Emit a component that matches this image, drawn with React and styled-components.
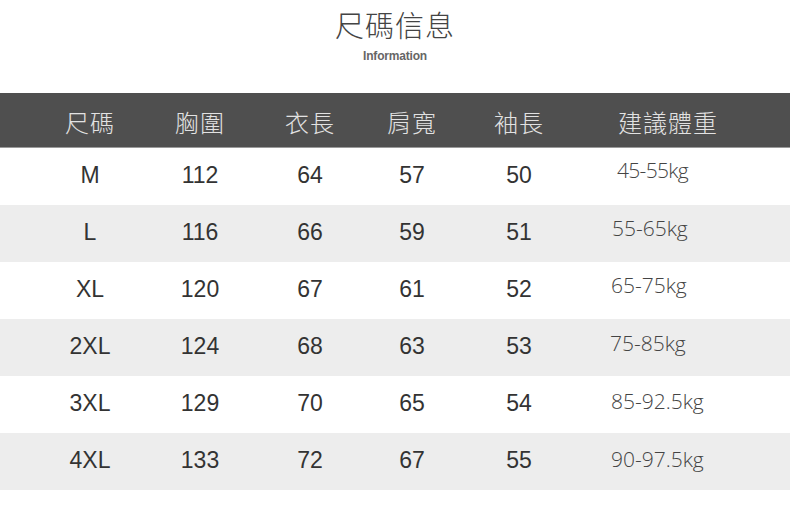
import styled, { createGlobalStyle } from 'styled-components'

const GlobalStyle = createGlobalStyle`
  html, body {
    margin:0;
    padding:0;
    background:#fff;
  }
`

const Page = styled.div`
  width:790px;
  height:515px;
  overflow:hidden;
  background:#fff;
  font-family:"Liberation Sans", Arial, sans-serif;
`

const TitleBlock = styled.div`
  height:93px;
  display:flex;
  flex-direction:column;
  align-items:center;
  padding-top:6px;
  box-sizing:border-box;
`

const Title = styled.h1`
  margin:0;
  font-family:"Noto Sans CJK TC", "Noto Sans CJK SC", sans-serif;
  font-weight:300;
  font-size:29px;
  line-height:36px;
  letter-spacing:1px;
  color:#444;
`

const SubTitle = styled.div`
  margin-top:7px;
  font-family:"Liberation Sans", Arial, sans-serif;
  font-weight:bold;
  font-size:12px;
  letter-spacing:-0.2px;
  color:#666;
`

const Row = styled.div`
  display:grid;
  grid-template-columns:35px 110px 110px 110px 94px 120px 178px;
  align-items:center;
  height:${({ $head }) => ($head ? '55px' : '57px')};
  background:${({ $head, $alt }) => ($head ? '#4f4f4f' : $alt ? '#ededed' : '#fff')};
  border-bottom:${({ $head }) => ($head ? '1px solid #9a9a9a' : 'none')};
  box-sizing:border-box;
`

const HeadCell = styled.div`
  text-align:center;
  font-family:"Noto Sans CJK TC", "Noto Sans CJK SC", sans-serif;
  font-weight:300;
  font-size:24px;
  color:#e2e2e2;
  letter-spacing:1px;
  padding-top:2px;
`

const Cell = styled.div`
  text-align:center;
  font-size:23px;
  color:#333;
  padding-bottom:2px;
`

const WeightCell = styled.div`
  font-family:"Open Sans", "Noto Sans", sans-serif;
  font-weight:300;
  font-size:21px;
  color:#444;
  letter-spacing:${({ $tight }) => ($tight ? '-0.7px' : '0')};
  padding-left:${({ $shift }) => $shift}px;
  padding-bottom:${({ $lift }) => $lift * 2 + 6}px;
`

const rows = [
  ['M', 112, 64, 57, 50, '45-55kg', 38, 4],
  ['L', 116, 66, 59, 51, '55-65kg', 33, 3],
  ['XL', 120, 67, 61, 52, '65-75kg', 32, 3],
  ['2XL', 124, 68, 63, 53, '75-85kg', 31, 2],
  ['3XL', 129, 70, 65, 54, '85-92.5kg', 32, 1],
  ['4XL', 133, 72, 67, 55, '90-97.5kg', 32, 0],
]

const heads = ['尺碼', '胸圍', '衣長', '肩寬', '袖長', '建議體重']

const App = () => (
  <Page>
    <GlobalStyle />
    <TitleBlock>
      <Title>尺碼信息</Title>
      <SubTitle>Information</SubTitle>
    </TitleBlock>
    <Row $head>
      <span />
      {heads.map(h => <HeadCell key={h}>{h}</HeadCell>)}
    </Row>
    {rows.map(([size, chest, len, shoulder, sleeve, weight, shift, lift], i) => (
      <Row key={size} $alt={i % 2 === 1}>
        <span />
        <Cell>{size}</Cell>
        <Cell>{chest}</Cell>
        <Cell>{len}</Cell>
        <Cell>{shoulder}</Cell>
        <Cell>{sleeve}</Cell>
        <WeightCell $shift={shift} $lift={lift} $tight={i === 0}>{weight}</WeightCell>
      </Row>
    ))}
  </Page>
)

export default App
